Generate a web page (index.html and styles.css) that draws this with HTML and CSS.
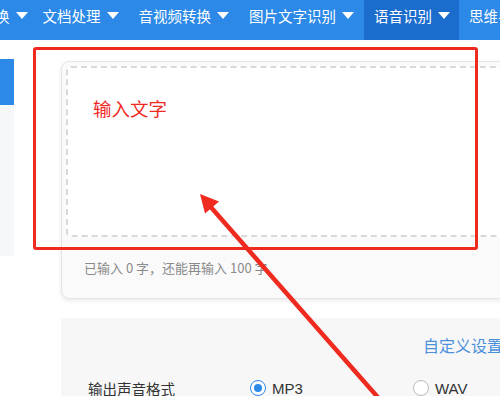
FILE: index.html
```html
<!DOCTYPE html>
<html lang="zh-CN">
<head>
    <meta charset="UTF-8">
    <meta name="viewport" content="width=device-width, initial-scale=1.0">
    <title>语音识别 - 文字转语音</title>
    <link rel="stylesheet" href="styles.css">
</head>
<body>
    <!-- Top navigation -->
    <div class="nav">
        <div class="nav-item first">换<span class="caret"></span></div>
        <div class="nav-item">文档处理<span class="caret"></span></div>
        <div class="nav-item">音视频转换<span class="caret"></span></div>
        <div class="nav-item">图片文字识别<span class="caret"></span></div>
        <div class="nav-item active">语音识别<span class="caret"></span></div>
        <div class="nav-item">思维导图<span class="caret"></span></div>
    </div>

    <div class="main">
        <div class="sidebar">
            <div class="side-active"></div>
            <div class="side-panel"></div>
        </div>

        <div class="content">
            <div class="card">
                <div class="text-area"></div>
                <div class="counter">已输入 0 字，还能再输入 100 字</div>
            </div>

            <div class="settings">
                <div class="settings-head">
                    <span class="custom-link">自定义设置</span>
                </div>
                <div class="settings-row">
                    <div class="row-label">输出声音格式</div>
                    <label class="radio checked"><span class="dot"></span>MP3</label>
                    <label class="radio"><span class="dot"></span>WAV</label>
                </div>
            </div>
        </div>
    </div>

    <!-- Annotation overlay -->
    <div class="mark-box"></div>
    <div class="mark-text">输入文字</div>
    <svg class="mark-arrow" width="500" height="396" viewBox="0 0 500 396">
        <line x1="382" y1="402" x2="209" y2="205" stroke="#ef2a1f" stroke-width="4.5" stroke-linecap="round"/>
        <polygon points="200,194 205,213.5 219,201.5" fill="#ef2a1f"/>
    </svg>
</body>
</html>
```

FILE: styles.css
```css
body {
    margin: 0;
    font-family: "Noto Sans CJK SC", "Noto Sans", sans-serif;
    background-color: #fff;
    overflow: hidden;
    width: 500px;
    height: 396px;
    position: relative;
}
.nav {
    display: flex;
    height: 40px;
    background-color: #2c89e8;
    white-space: nowrap;
    overflow: hidden;
}
.nav-item {
    display: flex;
    align-items: center;
    height: 30px;
    padding: 0 10px 10px 10px;
    color: #fff;
    font-size: 14.5px;
    flex-shrink: 0;
}
.nav-item.first {
    margin-left: -15px;
    padding-right: 5px;
}
.nav-item.active {
    background-color: #1a6ccd;
    padding-right: 9px;
}
.caret {
    display: inline-block;
    width: 0;
    height: 0;
    margin-left: 6px;
    margin-top: 1px;
    border-left: 6px solid transparent;
    border-right: 6px solid transparent;
    border-top: 7px solid #fff;
}
.main {
    display: flex;
}
.sidebar {
    width: 14px;
    margin-top: 19px;
    flex-shrink: 0;
}
.side-active {
    height: 46px;
    background-color: #2c89e8;
}
.side-panel {
    height: 151px;
    background-color: #f6f7f9;
}
.content {
    margin-left: 47px;
    width: 520px;
    flex-shrink: 0;
}
.card {
    margin-top: 21px;
    border: 1px solid #e4e4e4;
    border-radius: 8px;
    background-color: #fafafa;
    box-shadow: 0 2px 4px rgba(0, 0, 0, 0.08);
    padding: 4px 4px 0 4px;
}
.text-area {
    height: 167px;
    background-color: #fff;
    border: 2px dashed #d9d9d9;
    border-radius: 5px;
}
.counter {
    height: 61px;
    line-height: 61px;
    padding-left: 18px;
    font-size: 13px;
    color: #8a8a8a;
}
.settings {
    margin-top: 19px;
    background-color: #f7f7f8;
    height: 120px;
    padding-top: 15px;
    box-sizing: border-box;
}
.settings-head {
    height: 24px;
    line-height: 24px;
    padding-left: 362px;
}
.custom-link {
    color: #4b90db;
    font-size: 16px;
}
.settings-row {
    display: flex;
    align-items: center;
    height: 30px;
    margin-top: 16px;
    padding-left: 27px;
}
.row-label {
    width: 162px;
    font-size: 14.5px;
    color: #333;
}
.radio {
    display: flex;
    align-items: center;
    width: 163px;
    font-family: "Liberation Sans", Arial, sans-serif;
    font-size: 15px;
    color: #333;
}
.dot {
    width: 14px;
    height: 14px;
    border: 1px solid #bbb;
    border-radius: 50%;
    background-color: #fff;
    margin-right: 6px;
    box-sizing: content-box;
    position: relative;
}
.radio.checked .dot {
    border-color: #2c89e8;
}
.radio.checked .dot::after {
    content: "";
    position: absolute;
    left: 3px;
    top: 3px;
    width: 8px;
    height: 8px;
    border-radius: 50%;
    background-color: #2c89e8;
}
/* annotation overlay */
.mark-box {
    position: absolute;
    left: 33px;
    top: 47px;
    width: 439px;
    height: 197px;
    border: 3px solid #ef2a1f;
    border-radius: 3px;
}
.mark-text {
    position: absolute;
    left: 93px;
    top: 95px;
    font-size: 18.5px;
    color: #ef2a1f;
}
.mark-arrow {
    position: absolute;
    left: 0;
    top: 0;
}
```
